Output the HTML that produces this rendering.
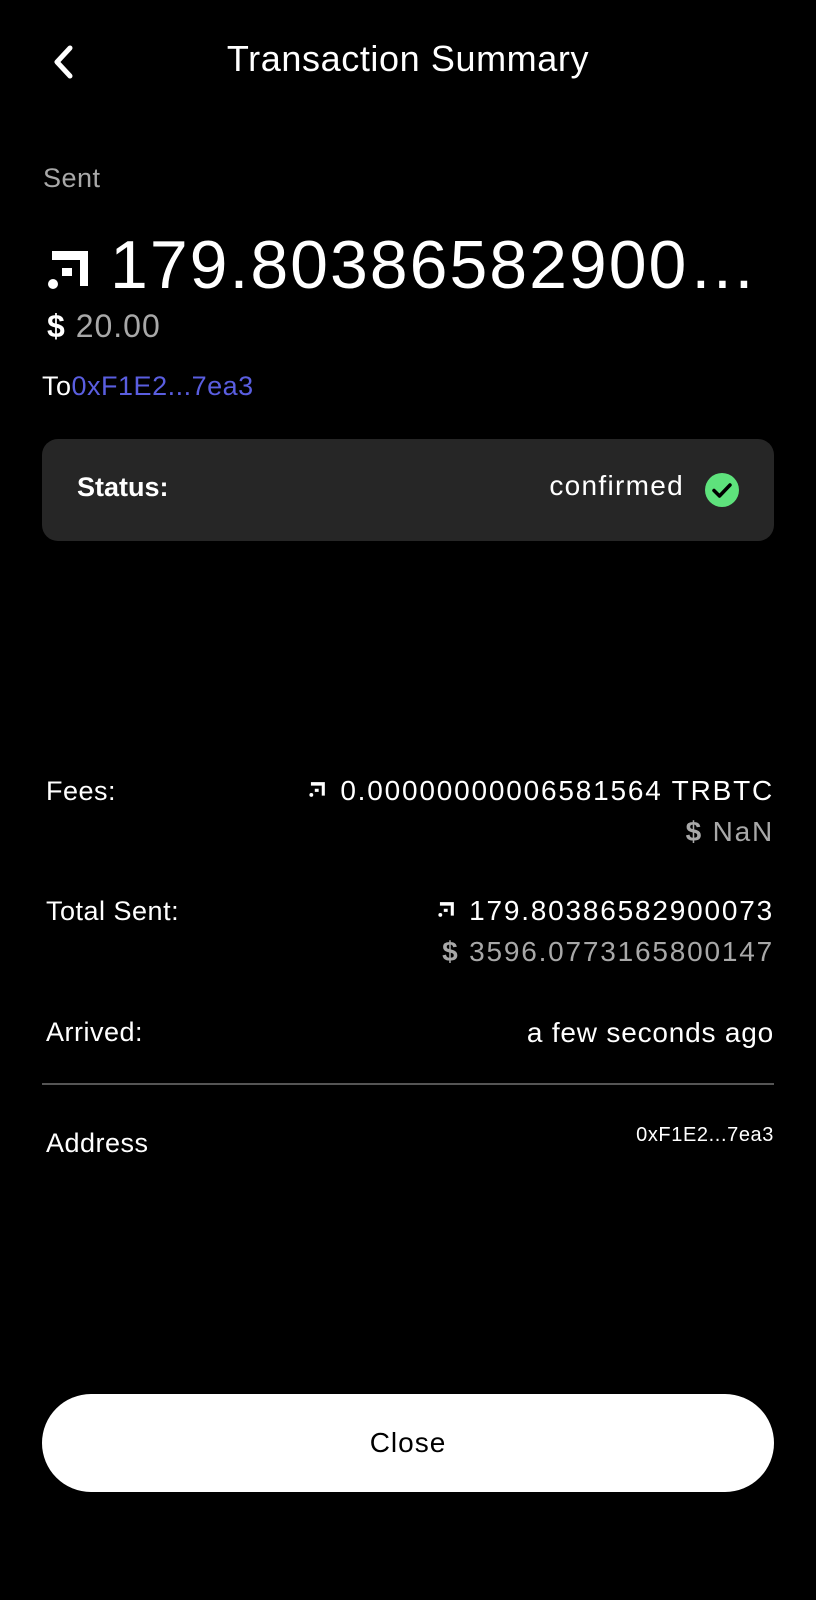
<!DOCTYPE html>
<html><head><meta charset="utf-8"><style>
*{margin:0;padding:0;box-sizing:border-box}
body{width:816px;height:1600px;background:#000;color:#fff;font-family:"Liberation Sans",sans-serif;position:relative;overflow:hidden}
.a{position:absolute;white-space:nowrap}
.r{text-align:right;right:42px}
.g{color:#a8a8a8}
.n{font-size:28px;letter-spacing:1.8px}
.ic{display:inline-block;vertical-align:middle;margin-right:14px;position:relative;top:-3px}
</style></head><body>
<svg class="a" style="left:50px;top:44px" width="28" height="36" viewBox="0 0 28 36"><path d="M20 4 L7 18 L20 32" stroke="#fff" stroke-width="5" fill="none" stroke-linecap="round" stroke-linejoin="round"/></svg>
<div class="a" style="left:0;width:816px;text-align:center;top:38px;font-size:36px;letter-spacing:0.6px">Transaction Summary</div>
<div class="a g" style="left:43px;top:163px;font-size:27px;letter-spacing:0.5px">Sent</div>
<svg class="a" style="left:47px;top:248px" width="44" height="44" viewBox="47 246 44 44"><path d="M52 249H88V284H80V258H52Z M62 266H72V274H62Z" fill="#fff"/><circle cx="53" cy="282" r="5" fill="#fff"/></svg>
<div class="a" style="left:110px;top:226px;font-size:68px;letter-spacing:2px">179.80386582900…</div>
<div class="a" style="left:47px;top:308px;font-size:32px;letter-spacing:1px"><b>$</b> <span class="g">20.00</span></div>
<div class="a" style="left:42px;top:371px;font-size:27px;letter-spacing:0.5px">To<span style="color:#5a5ee0">0xF1E2...7ea3</span></div>
<div class="a" style="left:42px;top:439px;width:732px;height:102px;background:#262626;border-radius:16px"></div>
<div class="a" style="left:77px;top:472px;font-size:27px;font-weight:bold">Status:</div>
<div class="a" style="right:132px;top:470px;font-size:28px;letter-spacing:1.3px">confirmed</div>
<svg class="a" style="left:705px;top:473px" width="34" height="34" viewBox="0 0 34 34"><circle cx="17" cy="17" r="17" fill="#5ee27c"/><path d="M9 17.5l5.5 5.5L25 12" stroke="#000" stroke-width="3.5" fill="none" stroke-linecap="round" stroke-linejoin="round"/></svg>
<div class="a" style="left:46px;top:776px;font-size:27px;letter-spacing:0.5px">Fees:</div>
<div class="a r n" style="top:775px"><svg class="ic" width="17" height="17" viewBox="47 246 44 44"><path d="M52 249H88V284H80V258H52Z M62 266H72V274H62Z" fill="#fff"/><circle cx="53" cy="282" r="5" fill="#fff"/></svg>0.00000000006581564 TRBTC</div>
<div class="a r n" style="top:816px"><b class="g">$</b> <span class="g">NaN</span></div>
<div class="a" style="left:46px;top:896px;font-size:27px;letter-spacing:0.5px">Total Sent:</div>
<div class="a r n" style="top:895px"><svg class="ic" width="17" height="17" viewBox="47 246 44 44"><path d="M52 249H88V284H80V258H52Z M62 266H72V274H62Z" fill="#fff"/><circle cx="53" cy="282" r="5" fill="#fff"/></svg>179.80386582900073</div>
<div class="a r n" style="top:936px"><b class="g">$</b> <span class="g">3596.0773165800147</span></div>
<div class="a" style="left:46px;top:1017px;font-size:27px;letter-spacing:0.5px">Arrived:</div>
<div class="a r" style="top:1017px;font-size:28px;letter-spacing:0.8px">a few seconds ago</div>
<div class="a" style="left:42px;top:1083px;width:732px;height:2px;background:#555"></div>
<div class="a" style="left:46px;top:1128px;font-size:27px;letter-spacing:0.5px">Address</div>
<div class="a r" style="top:1124px;font-size:20px;letter-spacing:0.6px">0xF1E2...7ea3</div>
<div class="a" style="left:42px;top:1394px;width:732px;height:98px;background:#fff;border-radius:49px;color:#000;text-align:center;line-height:98px;font-size:28px;letter-spacing:1px">Close</div>
</body></html>
